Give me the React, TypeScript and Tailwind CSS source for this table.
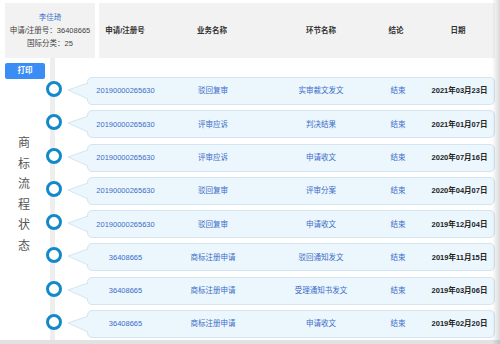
import React from "react";

interface Step {
  no: string;
  biz: string;
  step: string;
  result: string;
  date: string;
}

const steps: Step[] = [
  { no: "20190000265630", biz: "驳回复审", step: "实审裁文发文", result: "结束", date: "2021年03月23日" },
  { no: "20190000265630", biz: "评审应诉", step: "判决结果", result: "结束", date: "2021年01月07日" },
  { no: "20190000265630", biz: "评审应诉", step: "申请收文", result: "结束", date: "2020年07月16日" },
  { no: "20190000265630", biz: "驳回复审", step: "评审分案", result: "结束", date: "2020年04月07日" },
  { no: "20190000265630", biz: "驳回复审", step: "申请收文", result: "结束", date: "2019年12月04日" },
  { no: "36408665", biz: "商标注册申请", step: "驳回通知发文", result: "结束", date: "2019年11月15日" },
  { no: "36408665", biz: "商标注册申请", step: "受理通知书发文", result: "结束", date: "2019年03月06日" },
  { no: "36408665", biz: "商标注册申请", step: "申请收文", result: "结束", date: "2019年02月20日" },
];

const font = "font-['Liberation_Sans','Noto_Sans_CJK_SC',sans-serif]";

const Tail = () => (
  <svg width="20" height="20" viewBox="0 0 20 20" className="relative z-10 -mr-px shrink-0">
    <polygon points="20,2 0,9 20,18" fill="#ebf6fd" />
    <polyline points="20,2 0,9 20,18" fill="none" stroke="#d4e5f1" strokeWidth="1" />
  </svg>
);

const App: React.FC = () => {
  return (
    <div className={`w-[500px] h-[344px] bg-white overflow-hidden relative flex flex-col ${font}`}>
      {/* header */}
      <div className="mt-[3px] ml-[5px] mr-[5px] h-[55px] flex gap-[4px] shrink-0">
        <div className="w-[90px] bg-[#f2f2f2] flex flex-col items-center justify-center leading-[13px]">
          <p className="text-[7.5px] text-[#3f74cc]">李佳琦</p>
          <p className="text-[7.5px] text-[#444]">申请/注册号：36408665</p>
          <p className="text-[7.5px] text-[#444]">国际分类：25</p>
        </div>
        <div className="flex-1 bg-[#f2f2f2] grid grid-cols-[52px_122px_96px_54px_70px] items-center text-[7.5px] font-bold text-[#333] text-center">
          <span>申请/注册号</span>
          <span>业务名称</span>
          <span>环节名称</span>
          <span>结论</span>
          <span>日期</span>
        </div>
      </div>

      {/* body */}
      <div className="flex-1 flex overflow-hidden">
        <div className="w-[46px] shrink-0 flex flex-col">
          <button className="ml-[5px] mt-[5px] w-[40px] h-[16px] rounded-[2px] bg-[#3a8df5] text-white text-[7.5px] font-bold">
            打印
          </button>
          <div className="mt-[54px] pl-[18px] flex flex-col text-[12px] leading-[20.6px] text-[#555]">
            {"商标流程状态".split("").map((c) => (
              <span key={c}>{c}</span>
            ))}
          </div>
        </div>

        <div className="flex-1 relative pt-[19px] flex flex-col gap-[5.3px] pr-[5px]">
          <div className="absolute left-[4px] top-0 bottom-0 w-[5px] bg-[#eeeeee]" />
          {steps.map((s, i) => (
            <div key={i} className="relative flex items-center h-[28px] shrink-0">
              <div className="w-[16px] h-[16px] rounded-full border-[3px] border-[#1489c9] bg-white shrink-0 -mt-[4px]" />
              <div className="w-[6px] shrink-0" />
              <Tail />
              <div className="flex-1 h-full rounded-[5px] border border-[#d4e5f1] bg-[#ebf6fd] grid grid-cols-[75px_100px_116px_38px_1fr] items-center text-[7.5px] text-center">
                <span className="text-[#3c6cc8]">{s.no}</span>
                <span className="text-[#3c6cc8]">{s.biz}</span>
                <span className="text-[#3c6cc8]">{s.step}</span>
                <span className="text-[#3c6cc8]">{s.result}</span>
                <span className="pl-[8px] text-[#222] font-bold">{s.date}</span>
              </div>
            </div>
          ))}
        </div>
      </div>

      {/* bottom edge */}
      <div className="h-[4px] shrink-0 bg-[#e2e2e2]" />

      {/* right edge shade */}
      <div className="absolute right-0 top-0 bottom-0 w-[8px] bg-linear-to-r from-black/0 to-black/15 pointer-events-none" />
    </div>
  );
};

export default App;
